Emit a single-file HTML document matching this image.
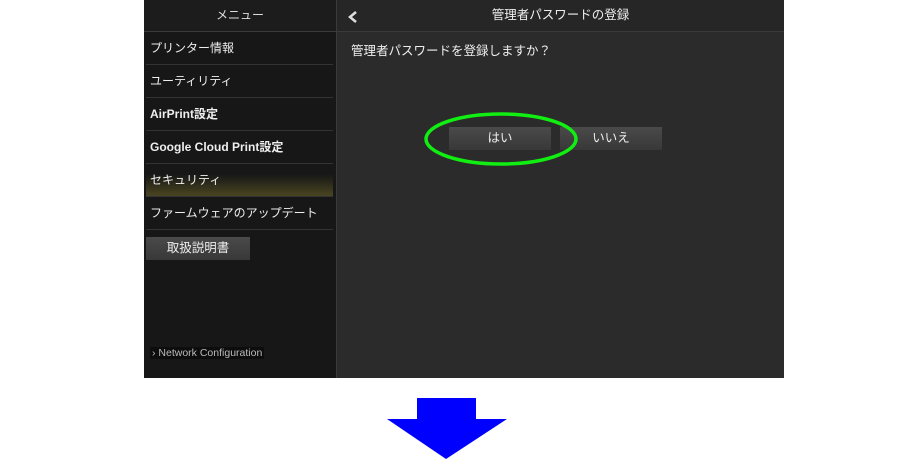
<!DOCTYPE html>
<html><head><meta charset="utf-8"><style>
body{margin:0;width:920px;height:473px;background:#fff;position:relative;overflow:hidden;font-family:"Liberation Sans","Noto Sans CJK JP",sans-serif;}
.p{position:absolute;left:144px;top:0;width:640px;height:378px;background:#2b2b2b;}
.side{position:absolute;left:0;top:0;width:192px;height:378px;background:#171717;border-right:1px solid #3a3a3a;}
.hd{position:absolute;left:0;top:0;width:192px;height:31px;background:#1c1c1c;border-bottom:1px solid #3a3a3a;color:#ddd;font-size:12px;text-align:center;line-height:31px;}
.it{position:absolute;left:2px;width:187px;height:32px;border-bottom:1px solid #333;color:#eee;font-size:12px;line-height:31px;padding-left:4px;box-sizing:border-box;}
.b{font-weight:bold;}
.sel{background:linear-gradient(#171717 30%,#4a4520);}
.btn{position:absolute;background:linear-gradient(#4a4a4a,#383838);color:#eee;font-size:12.5px;text-align:center;line-height:23px;}
.rh{position:absolute;left:193px;top:0;width:447px;height:31px;background:#262626;border-bottom:1px solid #3a3a3a;color:#eee;font-size:12.5px;text-align:center;line-height:31px;}
</style></head><body>
<div class="p">
<div class="side">
<div class="hd">メニュー</div>
<div class="it" style="top:33px">プリンター情報</div>
<div class="it" style="top:66px">ユーティリティ</div>
<div class="it b" style="top:99px">AirPrint設定</div>
<div class="it b" style="top:132px">Google Cloud Print設定</div>
<div class="it sel" style="top:165px">セキュリティ</div>
<div class="it" style="top:198px">ファームウェアのアップデート</div>
<div class="btn" style="left:2px;top:237px;width:104px;height:23px">取扱説明書</div>
<div style="position:absolute;left:6px;top:347px;font-size:10.5px;color:#bbb;background:#0d0d0d;padding:0 2px">› Network Configuration</div>
</div>
<div class="rh">管理者パスワードの登録</div>
<svg style="position:absolute;left:203px;top:10px" width="12" height="14"><path d="M9 2 L3 7 L9 12" fill="none" stroke="#ddd" stroke-width="2.5"/></svg>
<div style="position:absolute;left:207px;top:40px;color:#eee;font-size:12.5px">管理者パスワードを登録しますか？</div>
<div class="btn" style="left:305px;top:127px;width:102px;height:23px">はい</div>
<div class="btn" style="left:416px;top:127px;width:102px;height:23px">いいえ</div>
</div>
<svg style="position:absolute;left:0;top:0" width="920" height="473">
<ellipse cx="501" cy="139" rx="75" ry="25" fill="none" stroke="#11ee11" stroke-width="3.5"/>
<polygon points="417,398 476,398 476,419 507,419 446,459 387,419 417,419" fill="#0000ff"/>
</svg>
</body></html>
